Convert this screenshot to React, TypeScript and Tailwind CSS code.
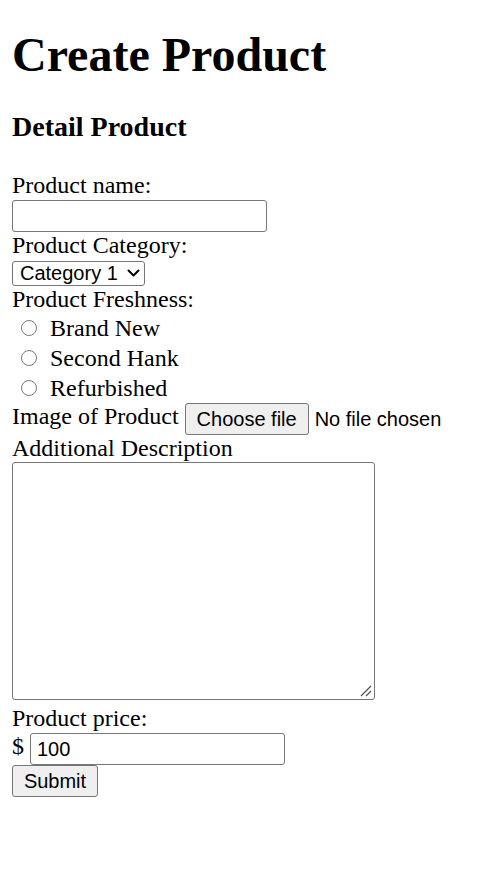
const control =
  "rounded-[3px] border border-[#767676] bg-white text-[20px] text-black outline-none [font-family:'Liberation_Sans',Arial,sans-serif]";

const grayButton =
  "rounded-[3px] border border-[#767676] bg-[#efefef] text-[20px] text-black [font-family:'Liberation_Sans',Arial,sans-serif]";

const freshness = ['Brand New', 'Second Hank', 'Refurbished'];

export default function App() {
  return (
    <div className="min-h-screen bg-white px-[12px] pt-[27px] text-[24px] text-black [font-family:'Liberation_Serif','Times_New_Roman',serif]">
      <h1 className="text-[48px] font-bold leading-[55px]">Create Product</h1>
      <h3 className="mt-[29px] text-[28px] font-bold leading-[32px]">Detail Product</h3>

      <form className="mt-[28px] flex flex-col items-start" onSubmit={(e) => e.preventDefault()}>
        <label htmlFor="name" className="leading-[28px]">
          Product name:
        </label>
        <input id="name" type="text" className={`${control} mt-[1px] block h-[32px] w-[255px] px-[6px]`} />

        <label htmlFor="category" className="leading-[26px]">
          Product Category:
        </label>
        <div className="relative mt-[3px] flex">
          <select
            id="category"
            defaultValue="1"
            className={`${control} block h-[25px] w-[133px] appearance-none pl-[7px] pr-[24px] leading-[23px]`}
          >
            <option value="1">Category 1</option>
            <option value="2">Category 2</option>
            <option value="3">Category 3</option>
          </select>
          <svg
            className="pointer-events-none absolute right-[5px] top-[8px]"
            width="13"
            height="8"
            viewBox="0 0 13 8"
            fill="none"
          >
            <path d="M1.5 1.5l5 5 5-5" stroke="#000" strokeWidth="2" strokeLinecap="round" strokeLinejoin="round" />
          </svg>
        </div>

        <span className="leading-[26px]">Product Freshness:</span>
        <div className="mt-[1px] flex flex-col">
          {freshness.map((item) => (
            <label key={item} className="flex h-[30px] items-center">
              <input
                type="radio"
                name="freshness"
                className="ml-[9px] block h-[16px] w-[16px] shrink-0 appearance-none rounded-full border-[1.5px] border-[#7a7a7a] bg-white"
              />
              <span className="ml-[13px] leading-[30px]">{item}</span>
            </label>
          ))}
        </div>

        <div className="flex h-[32px] items-start">
          <span className="leading-[26px]">Image of Product</span>
          <button type="button" className={`${grayButton} ml-[6px] h-[32px] w-[124px]`}>
            Choose file
          </button>
          <span className="ml-[6px] text-[20px] leading-[32px] [font-family:'Liberation_Sans',Arial,sans-serif]">
            No file chosen
          </span>
        </div>

        <label htmlFor="desc" className="leading-[26px]">
          Additional Description
        </label>
        <div className="relative mt-[1px] flex">
          <textarea
            id="desc"
            className={`${control} block h-[238px] w-[363px] resize-none rounded-[2px] px-[2px]`}
          />
          {/* resize grip */}
          <svg
            className="pointer-events-none absolute bottom-[3px] right-[3px]"
            width="12"
            height="12"
            viewBox="0 0 12 12"
            fill="none"
          >
            <path d="M1 11L11 1M6 11l5-5" stroke="#555" strokeWidth="1.3" />
          </svg>
        </div>

        <label htmlFor="price" className="mt-[5px] leading-[26px]">
          Product price:
        </label>
        <div className="mt-[2px] flex h-[32px] items-start">
          <span className="leading-[26px]">$</span>
          <input
            id="price"
            type="text"
            defaultValue="100"
            className={`${control} ml-[6px] block h-[32px] w-[255px] px-[6px]`}
          />
        </div>

        <button type="submit" className={`${grayButton} h-[32px] w-[86px]`}>
          Submit
        </button>
      </form>
    </div>
  );
}
